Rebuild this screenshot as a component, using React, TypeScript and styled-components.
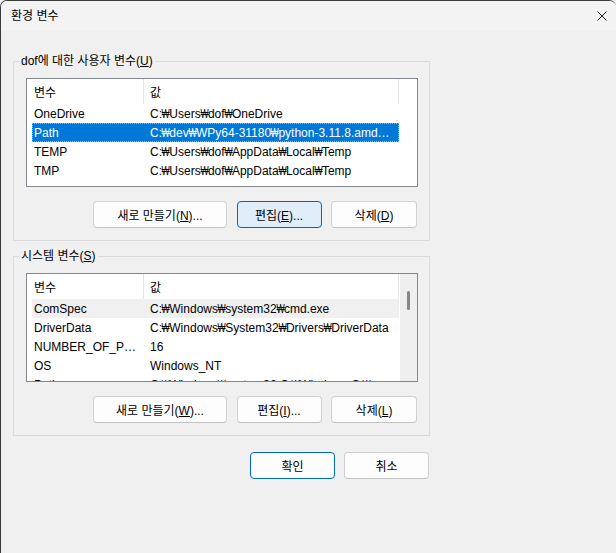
import React from "react";
import styled, { createGlobalStyle } from "styled-components";

const GlobalStyle = createGlobalStyle`
  * { box-sizing: border-box; }
  html, body {
    margin: 0;
    padding: 0;
    background: #f0f0f0;
  }
  body {
    font-family: "Liberation Sans", "Noto Sans CJK KR", sans-serif;
    font-size: 12px;
    color: #000;
  }
`;

const Window = styled.div`
  width: 616px;
  height: 553px;
  overflow: hidden;
  display: flex;
  flex-direction: column;
  background: #f0f0f0;
  border-top: 1px solid #3a3a3a;
  border-left: 1px solid #3a3a3a;
  border-radius: 7px 7px 0 0;
`;

const TitleBar = styled.div`
  height: 30px;
  flex-shrink: 0;
  display: flex;
  align-items: center;
  justify-content: space-between;
  padding: 0 9px 1px 10px;
  background: #f3f3f3;
`;

const Title = styled.span`
  font-size: 12px;
  line-height: 16px;
`;

const CloseButton = styled.span`
  display: flex;
  width: 10px;
  height: 10px;
`;

const Body = styled.div`
  display: flex;
  flex-direction: column;
  padding: 22px 0 0 12px;
`;

const GroupBox = styled.fieldset`
  width: 417px;
  min-inline-size: auto;
  margin: 0;
  padding: 9px 11px 12px 12px;
  border: 1px solid #dcdcdc;

  & + & {
    margin-top: 7px;
  }
`;

const Legend = styled.legend`
  margin-left: -7px;
  padding: 0 2px;
  line-height: 16px;
  font-size: 12px;
`;

const ListBox = styled.div`
  width: 392px;
  height: 109px;
  display: flex;
  overflow: hidden;
  background: #fff;
  border: 1px solid #828790;
`;

const ListContent = styled.div`
  flex: 1;
  min-width: 0;
  padding-left: 5px;
`;

const Header = styled.div`
  display: flex;
  height: 25px;
`;

const HeaderCell = styled.div<{ $w: number }>`
  width: ${(p) => p.$w}px;
  flex-shrink: 0;
  display: flex;
  align-items: center;
  padding-left: ${(p) => (p.$w > 150 ? 6 : 2)}px;
  border-right: 1px solid #e5e5e5;
`;

const Row = styled.div<{ $selected?: boolean; $hover?: boolean }>`
  width: 367px;
  height: 19px;
  display: flex;
  background: ${(p) => (p.$selected ? "#0078d7" : p.$hover ? "#f0f0f0" : "transparent")};
  color: ${(p) => (p.$selected ? "#fff" : "#000")};
  outline: ${(p) => (p.$selected ? "1px dotted #f7a35c" : "none")};
  outline-offset: -1px;
`;

const Cell = styled.div<{ $w: number }>`
  width: ${(p) => p.$w}px;
  flex-shrink: 0;
  padding: 2px ${(p) => (p.$w > 150 ? "6px 0 6px" : "1px 0 2px")};
  white-space: nowrap;
  overflow: hidden;
  text-overflow: ellipsis;
  line-height: 17px;
`;

// the Korean UI font draws the path separator as a narrow won sign
const Won = styled.span`
  display: inline-flex;
  justify-content: center;
  width: 7.3px;
`;

const WonGlyph = styled.span`
  display: inline-block;
  transform: scaleX(0.72);
`;

const ScrollTrack = styled.div`
  width: 17px;
  flex-shrink: 0;
  padding: 17px 0 0 7px;
  background: #efefef;
`;

const ScrollThumb = styled.div`
  width: 3px;
  height: 19px;
  border-radius: 2px;
  background: #878787;
`;

const ButtonRow = styled.div<{ $top: number; $gap: number }>`
  display: flex;
  justify-content: flex-end;
  gap: ${(p) => p.$gap}px;
  margin-top: ${(p) => p.$top}px;
  padding-right: 1px;
`;

const Footer = styled(ButtonRow)`
  width: 417px;
`;

const Button = styled.button<{ $w: number; $variant?: "focus" | "default" }>`
  width: ${(p) => p.$w}px;
  height: 27px;
  padding: 0;
  font-family: inherit;
  font-size: 12px;
  color: #000;
  border-radius: 4px;
  border: 1px solid ${(p) => (p.$variant ? "#0067c0" : "#d0d0d0")};
  border-bottom-color: ${(p) => (p.$variant ? "#0067c0" : "#c2c2c2")};
  background: ${(p) => (p.$variant === "focus" ? "#e0eef9" : "#fdfdfd")};
`;

const COL1 = 112;
const COL2 = 255;

type Variable = { name: string; value: string };

const userVars: Variable[] = [
  { name: "OneDrive", value: "C:₩Users₩dof₩OneDrive" },
  { name: "Path", value: "C:₩dev₩WPy64-31180₩python-3.11.8.amd64;C:₩dev₩WPy64-31180₩python-3.11.8.amd64₩Scripts" },
  { name: "TEMP", value: "C:₩Users₩dof₩AppData₩Local₩Temp" },
  { name: "TMP", value: "C:₩Users₩dof₩AppData₩Local₩Temp" },
];

const systemVars: Variable[] = [
  { name: "ComSpec", value: "C:₩Windows₩system32₩cmd.exe" },
  { name: "DriverData", value: "C:₩Windows₩System32₩Drivers₩DriverData" },
  { name: "NUMBER_OF_PROCESSORS", value: "16" },
  { name: "OS", value: "Windows_NT" },
  { name: "Path", value: "C:₩Windows₩system32;C:₩Windows;C:₩Windows₩System32₩Wbem" },
];

function PathText({ value }: { value: string }) {
  const parts = value.split("₩");
  return (
    <>
      {parts.map((part, i) => (
        <React.Fragment key={i}>
          {i > 0 && (
            <Won>
              <WonGlyph>₩</WonGlyph>
            </Won>
          )}
          {part}
        </React.Fragment>
      ))}
    </>
  );
}

function Mnemonic({ text, hotkey, suffix = "" }: { text: string; hotkey: string; suffix?: string }) {
  return (
    <>
      {text}(<u>{hotkey}</u>){suffix}
    </>
  );
}

function VariableList({
  vars,
  selected,
  hover,
  scroll,
}: {
  vars: Variable[];
  selected?: number;
  hover?: number;
  scroll?: boolean;
}) {
  return (
    <ListBox>
      <ListContent>
        <Header>
          <HeaderCell $w={COL1}>변수</HeaderCell>
          <HeaderCell $w={COL2}>값</HeaderCell>
        </Header>
        {vars.map((v, i) => (
          <Row key={v.name + i} $selected={i === selected} $hover={i === hover}>
            <Cell $w={COL1}>{v.name}</Cell>
            <Cell $w={COL2}>
              <PathText value={v.value} />
            </Cell>
          </Row>
        ))}
      </ListContent>
      {scroll && (
        <ScrollTrack>
          <ScrollThumb />
        </ScrollTrack>
      )}
    </ListBox>
  );
}

export default function App() {
  return (
    <>
      <GlobalStyle />
      <Window>
        <TitleBar>
          <Title>환경 변수</Title>
          <CloseButton>
            <svg width="10" height="10" viewBox="0 0 10 10">
              <path d="M0.5 0.5 L9.5 9.5 M9.5 0.5 L0.5 9.5" stroke="#1a1a1a" strokeWidth="1" fill="none" />
            </svg>
          </CloseButton>
        </TitleBar>
        <Body>
          <GroupBox>
            <Legend>
              <Mnemonic text="dof에 대한 사용자 변수" hotkey="U" />
            </Legend>
            <VariableList vars={userVars} selected={1} />
            <ButtonRow $top={14} $gap={9.5}>
              <Button $w={134}>
                <Mnemonic text="새로 만들기" hotkey="N" suffix="..." />
              </Button>
              <Button $w={85} $variant="focus">
                <Mnemonic text="편집" hotkey="E" suffix="..." />
              </Button>
              <Button $w={86}>
                <Mnemonic text="삭제" hotkey="D" />
              </Button>
            </ButtonRow>
          </GroupBox>
          <GroupBox>
            <Legend>
              <Mnemonic text="시스템 변수" hotkey="S" />
            </Legend>
            <VariableList vars={systemVars} hover={0} scroll />
            <ButtonRow $top={14} $gap={9.5}>
              <Button $w={134}>
                <Mnemonic text="새로 만들기" hotkey="W" suffix="..." />
              </Button>
              <Button $w={85}>
                <Mnemonic text="편집" hotkey="I" suffix="..." />
              </Button>
              <Button $w={86}>
                <Mnemonic text="삭제" hotkey="L" />
              </Button>
            </ButtonRow>
          </GroupBox>
          <Footer $top={16} $gap={9}>
            <Button $w={85} $variant="default">확인</Button>
            <Button $w={85}>취소</Button>
          </Footer>
        </Body>
      </Window>
    </>
  );
}
